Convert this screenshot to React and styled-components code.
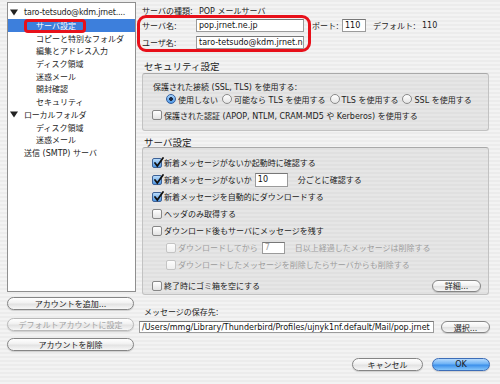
import React from 'react';
import styled, { createGlobalStyle, css } from 'styled-components';

const GlobalStyle = createGlobalStyle`
  html, body { margin: 0; padding: 0; }
  body {
    width: 500px;
    height: 384px;
    overflow: hidden;
    font-family: "DejaVu Sans", "Noto Sans CJK JP", sans-serif;
    font-size: 8px;
    color: #1c1c1c;
    background: repeating-linear-gradient(to bottom, #ececec 0px, #ececec 2px, #f3f3f3 2px, #f3f3f3 4px);
  }
`;

const Window = styled.div`
  display: flex;
  gap: 6px;
  width: 500px;
  height: 384px;
  box-sizing: border-box;
  padding: 2px 0 0 7px;
`;

// left side: account tree + buttons
const Sidebar = styled.div`
  width: 129px;
  display: flex;
  flex-direction: column;
`;

const Tree = styled.div`
  height: 290px;
  box-sizing: border-box;
  background: #fff;
  border: 1px solid #8f8f8f;
  padding-top: 3.5px;
`;

const TreeRow = styled.div`
  height: 12.7px;
  display: flex;
  align-items: center;
  white-space: nowrap;
  overflow: hidden;
  padding-left: ${p => p.$indent}px;
  ${p => p.$selected && css`
    background: #3d7fdc;
    color: #fff;
    overflow: visible;
  `}
`;

const Toggle = styled.span`
  width: 14px;
  display: flex;
  align-items: center;
`;

const RedMark = styled.span`
  display: inline-flex;
  align-items: center;
  height: 8px;
  padding: 0 7px 0 9px;
  border: 3px solid #e8101a;
  border-radius: 4px;
`;

const SideButtons = styled.div`
  display: flex;
  flex-direction: column;
  gap: 7.5px;
  margin-top: 5px;
`;

const AquaButton = styled.button`
  font: inherit;
  font-size: 8px;
  height: 13px;
  width: ${p => p.$w || 'auto'};
  padding: 0;
  box-sizing: border-box;
  border: 1px solid ${p => (p.$disabled ? '#b9b9b9' : '#858585')};
  border-radius: 7px;
  color: ${p => (p.$disabled ? '#a3a3a3' : '#1c1c1c')};
  background: linear-gradient(#ffffff 0%, #f1f1f1 45%, #e2e2e2 55%, #f7f7f7 100%);
  box-shadow: 0 1px 1px rgba(0, 0, 0, 0.15);
  display: flex;
  align-items: center;
  justify-content: center;
  ${p => p.$primary && css`
    border-color: #3c6db7;
    background: linear-gradient(#b6dafd 0%, #6db2f5 45%, #3b8fea 55%, #86c6fb 100%);
  `}
`;

// right side
const Main = styled.div`
  width: 348px;
  display: flex;
  flex-direction: column;
`;

const TypeRow = styled.div`
  height: 12px;
  margin-top: 2px;
  display: flex;
  align-items: center;
`;

const Label = styled.span`
  width: ${p => p.$w}px;
  flex-shrink: 0;
  white-space: nowrap;
`;

const ServerRow = styled.div`
  display: flex;
  align-items: flex-start;
  margin-top: -1px;
  margin-left: -5px;
`;

const Highlight = styled.div`
  width: 174px;
  box-sizing: border-box;
  border: 3px solid #e8101a;
  border-radius: 9px;
  padding: 1px 4px 0 2px;
  display: flex;
  flex-direction: column;
  gap: 4px;
  height: 37px;
`;

const FieldRow = styled.div`
  display: flex;
  align-items: center;
  height: 13px;
`;

const Input = styled.div`
  height: ${p => p.$h || 13}px;
  width: ${p => p.$w}px;
  box-sizing: border-box;
  background: #fff;
  border: 1px solid #9b9b9b;
  border-top-color: #777;
  padding: 0 2px;
  display: flex;
  align-items: center;
  overflow: hidden;
  white-space: nowrap;
  flex-shrink: 0;
  font-size: 8px;
  color: ${p => (p.$disabled ? '#a0a0a0' : '#111')};
`;

const PortGroup = styled.div`
  display: flex;
  align-items: center;
  height: 13px;
  margin-top: 4px;
  margin-left: 1px;
  white-space: nowrap;
`;

const SectionTitle = styled.div`
  font-size: ${p => p.$fs || 9.5}px;
  height: ${p => p.$h || 12}px;
  margin-top: ${p => p.$mt}px;
  padding-left: 2px;
  display: flex;
  align-items: center;
`;

const Group = styled.div`
  width: 347px;
  height: ${p => p.$h}px;
  box-sizing: border-box;
  margin-top: ${p => p.$mt || 0}px;
  border: 1px solid #c2c2c2;
  border-top-color: #a9a9a9;
  border-radius: 3px;
  background: rgba(0, 0, 0, 0.05);
  padding: 6px 7px 0 9px;
  display: flex;
  flex-direction: column;
`;

const Line = styled.div`
  display: flex;
  align-items: center;
  height: ${p => p.$h || 12}px;
  margin-top: ${p => p.$mt || 0}px;
  padding-left: ${p => p.$indent || 0}px;
  white-space: nowrap;
  color: ${p => (p.$disabled ? '#9d9d9d' : 'inherit')};
`;

const Radios = styled.div`
  display: flex;
  align-items: center;
  gap: 4px;
`;

const Choice = styled.span`
  display: flex;
  align-items: center;
  gap: 2px;
`;

const RadioDot = styled.span`
  width: 10px;
  height: 10px;
  box-sizing: border-box;
  border-radius: 50%;
  border: 1px solid ${p => (p.$on ? '#345f9e' : '#8a8a8a')};
  background: ${p => (p.$on
    ? 'radial-gradient(circle, #1d2a44 0 1.6px, transparent 2.2px), linear-gradient(#a9d3fb, #4f98e6)'
    : 'linear-gradient(#ffffff, #e4e4e4)')};
  flex-shrink: 0;
`;

const Box = styled.span`
  width: 10px;
  height: 10px;
  box-sizing: border-box;
  border-radius: 2px;
  border: 1px solid ${p => (p.$on ? '#3d6196' : p.$disabled ? '#c4c4c4' : '#878787')};
  background: ${p => (p.$on
    ? 'linear-gradient(#b9dcfb, #4f97e4)'
    : p.$disabled ? 'linear-gradient(#fdfdfd, #efefef)' : 'linear-gradient(#ffffff, #e2e2e2)')};
  margin-right: 2px;
  flex-shrink: 0;
  position: relative;
  svg { position: absolute; left: 0px; top: -2px; }
`;

const PathRow = styled.div`
  display: flex;
  align-items: center;
  margin-top: 4px;
  margin-left: -3px;
  gap: 7px;
`;

const Footer = styled.div`
  display: flex;
  justify-content: flex-end;
  gap: 9px;
  margin-top: 25px;
`;

const Triangle = () => (
  <svg width="8" height="7" viewBox="0 0 8 7">
    <path d="M0 0.5 H8 L4 6.5 Z" fill="#222" />
  </svg>
);

const Check = ({ on, disabled }) => (
  <Box $on={on} $disabled={disabled}>
    {on && (
      <svg width="11" height="11" viewBox="0 0 11 11">
        <path d="M2 6 L4.3 9 L10 1" fill="none" stroke="#111" strokeWidth="1.8" strokeLinecap="round" />
      </svg>
    )}
  </Box>
);

const tree = [
  { label: 'taro-tetsudo@kdm.jrnet....', level: 0, open: true },
  { label: 'サーバ設定', level: 1, selected: true },
  { label: 'コピーと特別なフォルダ', level: 1 },
  { label: '編集とアドレス入力', level: 1 },
  { label: 'ディスク領域', level: 1 },
  { label: '迷惑メール', level: 1 },
  { label: '開封確認', level: 1 },
  { label: 'セキュリティ', level: 1 },
  { label: 'ローカルフォルダ', level: 0, open: true },
  { label: 'ディスク領域', level: 1 },
  { label: '迷惑メール', level: 1 },
  { label: '送信 (SMTP) サーバ', level: 0, leaf: true },
];

export default function App() {
  return (
    <>
      <GlobalStyle />
      <Window>
        <Sidebar>
          <Tree>
            {tree.map((item, i) => {
              if (item.selected) {
                return (
                  <TreeRow key={i} $indent={16} $selected>
                    <RedMark>{item.label}</RedMark>
                  </TreeRow>
                );
              }
              if (item.level === 0) {
                return (
                  <TreeRow key={i} $indent={item.leaf ? 16 : 2}>
                    {!item.leaf && <Toggle><Triangle /></Toggle>}
                    <span style={{ letterSpacing: item.leaf ? 0 : -0.2 }}>{item.label}</span>
                  </TreeRow>
                );
              }
              return (
                <TreeRow key={i} $indent={28}>{item.label}</TreeRow>
              );
            })}
          </Tree>
          <SideButtons>
            <AquaButton $w="127px">アカウントを追加...</AquaButton>
            <AquaButton $w="127px" $disabled>デフォルトアカウントに設定</AquaButton>
            <AquaButton $w="127px">アカウントを削除</AquaButton>
          </SideButtons>
        </Sidebar>

        <Main>
          <TypeRow>
            <Label $w={57}>サーバの種類:</Label>
            <span>POP メールサーバ</span>
          </TypeRow>

          <ServerRow>
            <Highlight>
              <FieldRow>
                <Label $w={54}>サーバ名:</Label>
                <Input $w={108}>pop.jrnet.ne.jp</Input>
              </FieldRow>
              <FieldRow>
                <Label $w={54}>ユーザ名:</Label>
                <Input $w={108}>taro-tetsudo@kdm.jrnet.ne.jp</Input>
              </FieldRow>
            </Highlight>
            <PortGroup>
              <Label $w={30}>ポート:</Label>
              <Input $w={24}>110</Input>
              <Label $w={49} style={{ marginLeft: 7 }}>デフォルト:</Label>
              <span>110</span>
            </PortGroup>
          </ServerRow>

          <SectionTitle $mt={8}>セキュリティ設定</SectionTitle>
          <Group $h={58} $mt={1}>
            <Line $indent={1}>保護された接続 (SSL, TLS) を使用する:</Line>
            <Line $mt={1} $indent={14}>
              <Radios>
                <Choice><RadioDot $on />使用しない</Choice>
                <Choice><RadioDot />可能なら TLS を使用する</Choice>
                <Choice><RadioDot />TLS を使用する</Choice>
                <Choice><RadioDot />SSL を使用する</Choice>
              </Radios>
            </Line>
            <Line $mt={4}>
              <Check />保護された認証 (APOP, NTLM, CRAM-MD5 や Kerberos) を使用する
            </Line>
          </Group>

          <SectionTitle $mt={5} $h={11}>サーバ設定</SectionTitle>
          <Group $h={148}>
            <Line $h={17}><Check on />新着メッセージがないか起動時に確認する</Line>
            <Line $h={17}>
              <Check on />新着メッセージがないか
              <Input $w={33} $h={14} style={{ margin: '0 10px 0 3px' }}>10</Input>
              分ごとに確認する
            </Line>
            <Line $h={17}><Check on />新着メッセージを自動的にダウンロードする</Line>
            <Line $h={17}><Check />ヘッダのみ取得する</Line>
            <Line $h={17}><Check />ダウンロード後もサーバにメッセージを残す</Line>
            <Line $h={17} $indent={14} $disabled>
              <Check disabled />ダウンロードしてから
              <Input $w={23} $h={12} $disabled style={{ margin: '0 10px 0 4px' }}>7</Input>
              日以上経過したメッセージは削除する
            </Line>
            <Line $h={17} $indent={14} $disabled>
              <Check disabled />ダウンロードしたメッセージを削除したらサーバからも削除する
            </Line>
            <Line $h={17} $mt={4}>
              <Check />終了時にゴミ箱を空にする
              <AquaButton $w="49px" style={{ marginLeft: 'auto', height: 12 }}>詳細...</AquaButton>
            </Line>
          </Group>

          <SectionTitle $mt={10} $fs={8}>メッセージの保存先:</SectionTitle>
          <PathRow>
            <Input $w={295} $h={12}>/Users/mmg/Library/Thunderbird/Profiles/ujnyk1nf.default/Mail/pop.jrnet</Input>
            <AquaButton $w="50px" style={{ height: 12 }}>選択...</AquaButton>
          </PathRow>

          <Footer>
            <AquaButton $w="71px">キャンセル</AquaButton>
            <AquaButton $w="58px" $primary>OK</AquaButton>
          </Footer>
        </Main>
      </Window>
    </>
  );
}
